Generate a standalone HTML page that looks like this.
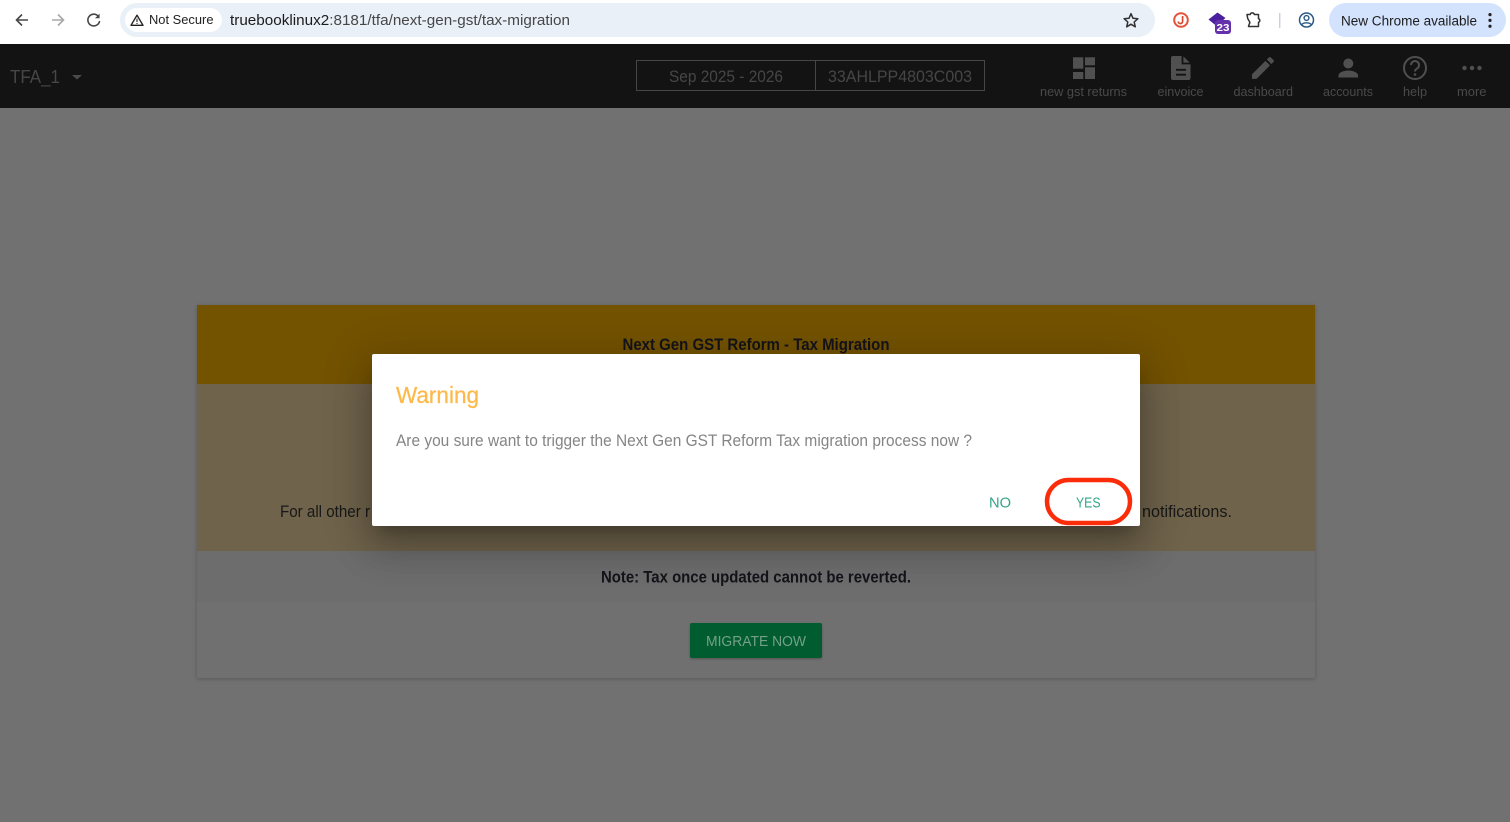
<!DOCTYPE html>
<html lang="en">
<head>
<meta charset="utf-8">
<title>Tax Migration</title>
<style>
html,body{margin:0;padding:0;width:1510px;height:822px;overflow:hidden;background:#717171;font-family:"Liberation Sans",sans-serif}
.b{position:absolute}
svg{position:absolute;left:0;top:0}
text{font-family:"Liberation Sans",sans-serif}
</style>
</head>
<body>
<div class="b" style="left:0;top:0;width:1510px;height:44px;background:#fff"></div>
<div class="b" style="left:120px;top:3px;width:1035px;height:34px;border-radius:17px;background:#e9f0f8"></div>
<div class="b" style="left:125px;top:8px;width:97px;height:24px;border-radius:12px;background:#fff"></div>
<div class="b" style="left:1329px;top:3px;width:177px;height:34px;border-radius:17px;background:#d3e3fd"></div>
<div class="b" style="left:0;top:44px;width:1510px;height:64px;background:#131313"></div>
<div class="b" style="left:0;top:108px;width:1510px;height:714px;background:#717171"></div>
<div class="b" style="left:636px;top:60px;width:347px;height:29px;border:1px solid #464646"></div>
<div class="b" style="left:815px;top:60px;width:1px;height:31px;background:#464646"></div>
<div class="b" style="left:197px;top:305px;width:1118px;height:373px;background:#707070;box-shadow:0 1px 4px rgba(0,0,0,.22)"></div>
<div class="b" style="left:197px;top:305px;width:1118px;height:79px;background:#735200"></div>
<div class="b" style="left:197px;top:384px;width:1118px;height:167px;background:#6f634b"></div>
<div class="b" style="left:197px;top:551px;width:1118px;height:51px;background:#6d6d6d"></div>
<div class="b" style="left:690px;top:623px;width:132px;height:35px;border-radius:2px;background:#015d2f;box-shadow:0 1px 2px rgba(0,0,0,.25)"></div>
<svg width="1510" height="822" viewBox="0 0 1510 822">
  <g fill="none" stroke="#474747" stroke-width="1.6">
    <path d="M28 20H16.5M22 14.5 16.5 20l5.5 5.5"/>
    <path d="M52 20h11.5M58 14.5l5.5 5.5-5.500 5.500" stroke="#a8a8a8"/>
    <path d="M98.500 16.500A5.900 5.900 0 1 0 99.600 21"/>
  </g>
  <path d="M99.600 13.600v4.600H95z" fill="#474747"/>
  <path d="M137 15.200 143 25.300H131z" fill="none" stroke="#222" stroke-width="1.400" stroke-linejoin="round"/>
  <path d="M137 18.600v3.400M137 23v1" stroke="#222" stroke-width="1.100"/>
  <text x="149" y="24.200" font-size="12.500" fill="#222" textLength="64.500" lengthAdjust="spacingAndGlyphs">Not Secure</text>
  <text x="230" y="25" font-size="14.500" fill="#1c1c1c" textLength="340" lengthAdjust="spacingAndGlyphs"><tspan>truebooklinux2</tspan><tspan fill="#474747">:8181/tfa/next-gen-gst/tax-migration</tspan></text>
  <path d="M1131 13.700l2 4.600 4.900.4-3.700 3.300 1.100 4.800-4.300-2.600-4.300 2.600 1.100-4.800-3.700-3.300 4.900-.4z" fill="none" stroke="#333" stroke-width="1.500" stroke-linejoin="round"/>
  <circle cx="1181" cy="20" r="6.800" fill="#fff" stroke="#e4533a" stroke-width="2"/>
  <path d="M1182.600 16v5.200a2.200 2.200 0 0 1-4.400.3" fill="none" stroke="#d9472f" stroke-width="1.700"/>
  <path d="M1208.500 19.500l9-7 8 5.500-9 8z" fill="#4b1f9e"/>
  <rect x="1215" y="20" width="16" height="14" rx="3" fill="#6430ac"/>
  <text x="1216.500" y="31" font-size="10.500" font-weight="bold" fill="#fff" textLength="13" lengthAdjust="spacingAndGlyphs">23</text>
  <path d="M1247 14.500h3.200a2.100 2.100 0 0 1 4.100 0h4.200v4.200a1.900 1.900 0 0 1 0 3.600v4.200h-10l.8-2.600a2 2 0 0 0 0-2.600l-1.600-2.800z" fill="none" stroke="#333" stroke-width="1.500" stroke-linejoin="round"/>
  <rect x="1279" y="13" width="1.400" height="15" fill="#c6d2df"/>
  <circle cx="1306.500" cy="20" r="7" fill="none" stroke="#2b5a85" stroke-width="1.500"/>
  <circle cx="1306.500" cy="18" r="2.400" fill="none" stroke="#2b5a85" stroke-width="1.400"/>
  <path d="M1301.700 24.800c1.500-2.600 8-2.600 9.600 0" fill="none" stroke="#2b5a85" stroke-width="1.400"/>
  <text x="1341" y="25.400" font-size="13.500" fill="#1c1c1c" textLength="136" lengthAdjust="spacingAndGlyphs">New Chrome available</text>
  <circle cx="1490" cy="14.600" r="1.600" fill="#222"/><circle cx="1490" cy="20.400" r="1.600" fill="#222"/><circle cx="1490" cy="26.200" r="1.600" fill="#222"/>
  <text x="10" y="83" font-size="18.500" fill="#464646" textLength="50" lengthAdjust="spacingAndGlyphs">TFA_1</text>
  <path d="M72 75h10l-5 4.500z" fill="#4b4b4b"/>
  <text x="669" y="82" font-size="16.500" fill="#464646" textLength="114" lengthAdjust="spacingAndGlyphs">Sep 2025 - 2026</text>
  <text x="828" y="82" font-size="16.500" fill="#464646" textLength="144" lengthAdjust="spacingAndGlyphs">33AHLPP4803C003</text>
  <g fill="#505050">
    <rect x="1073" y="57.300" width="10.300" height="11.400"/><rect x="1085" y="57.300" width="10" height="8"/>
    <rect x="1073" y="72" width="10.300" height="7"/><rect x="1085" y="67.300" width="10" height="11.700"/>
    <path d="M1173 56h10l7.500 7.500V78a2 2 0 0 1-2 2H1173a2 2 0 0 1-2-2V58a2 2 0 0 1 2-2z"/>
    <path transform="translate(1248.300 53.300) scale(1.220)" d="M3 17.250V21h3.750L17.810 9.940l-3.750-3.750L3 17.250zM20.710 7.040c.39-.39.39-1.020 0-1.410l-2.340-2.340c-.39-.39-1.020-.39-1.410 0l-1.830 1.830 3.750 3.750 1.830-1.830z"/>
    <circle cx="1348.300" cy="63.500" r="5"/>
    <path d="M1338.500 77.500v-2c0-3.400 6.500-5 9.800-5s9.800 1.600 9.800 5v2z"/>
    <circle cx="1464.500" cy="68" r="2.200"/><circle cx="1472" cy="68" r="2.200"/><circle cx="1479.500" cy="68" r="2.200"/>
  </g>
  <path d="M1182.500 56v7.500h8M1176 69.800h10M1176 74.700h10" fill="none" stroke="#131313" stroke-width="1.800"/>
  <circle cx="1415" cy="68" r="11" fill="none" stroke="#505050" stroke-width="2"/>
  <path d="M1411 65a4 4 0 1 1 6.300 3.300c-1.500 1-2.300 1.700-2.300 3.200" fill="none" stroke="#505050" stroke-width="2"/>
  <circle cx="1415" cy="74.500" r="1.300" fill="#505050"/>
  <g font-size="13" fill="#4a4a4a">
    <text x="1040" y="96" textLength="87" lengthAdjust="spacingAndGlyphs">new gst returns</text>
    <text x="1157.500" y="96" textLength="46" lengthAdjust="spacingAndGlyphs">einvoice</text>
    <text x="1233.500" y="96" textLength="59.500" lengthAdjust="spacingAndGlyphs">dashboard</text>
    <text x="1323" y="96" textLength="50" lengthAdjust="spacingAndGlyphs">accounts</text>
    <text x="1403" y="96" textLength="24" lengthAdjust="spacingAndGlyphs">help</text>
    <text x="1457" y="96" textLength="29.500" lengthAdjust="spacingAndGlyphs">more</text>
  </g>
  <text x="622.500" y="350" font-size="16.500" font-weight="bold" fill="#14141a" textLength="267" lengthAdjust="spacingAndGlyphs">Next Gen GST Reform - Tax Migration</text>
  <text x="280" y="517" font-size="16.500" fill="#181818" textLength="90" lengthAdjust="spacingAndGlyphs">For all other r</text>
  <text x="1142" y="517" font-size="16.500" fill="#181818" textLength="90" lengthAdjust="spacingAndGlyphs">notifications.</text>
  <text x="601" y="582.500" font-size="16.500" font-weight="bold" fill="#14141a" textLength="310" lengthAdjust="spacingAndGlyphs">Note: Tax once updated cannot be reverted.</text>
  <text x="706" y="646" font-size="15" fill="#74a08a" textLength="100" lengthAdjust="spacingAndGlyphs">MIGRATE NOW</text>
</svg>
<div class="b" style="left:372px;top:354px;width:768px;height:172px;border-radius:2px;background:#fff;box-shadow:0 11px 15px -7px rgba(0,0,0,.24),0 24px 38px 3px rgba(0,0,0,.16),0 9px 46px 8px rgba(0,0,0,.14)"></div>
<svg width="1510" height="822" viewBox="0 0 1510 822">
  <text x="396" y="403" font-size="23" fill="#fdb94b" stroke="#fdb94b" stroke-width=".3" textLength="83" lengthAdjust="spacingAndGlyphs">Warning</text>
  <text x="396" y="446" font-size="16.500" fill="#858585" textLength="576" lengthAdjust="spacingAndGlyphs">Are you sure want to trigger the Next Gen GST Reform Tax migration process now ?</text>
  <text x="989" y="507.500" font-size="14.500" fill="#32a586" textLength="22" lengthAdjust="spacingAndGlyphs">NO</text>
  <text x="1076" y="507.500" font-size="14.500" fill="#32a586" textLength="24.500" lengthAdjust="spacingAndGlyphs">YES</text>
  <rect x="1047" y="480" width="83" height="43" rx="21.500" fill="none" stroke="#fb2c0a" stroke-width="4.500"/>
</svg>
</body>
</html>
